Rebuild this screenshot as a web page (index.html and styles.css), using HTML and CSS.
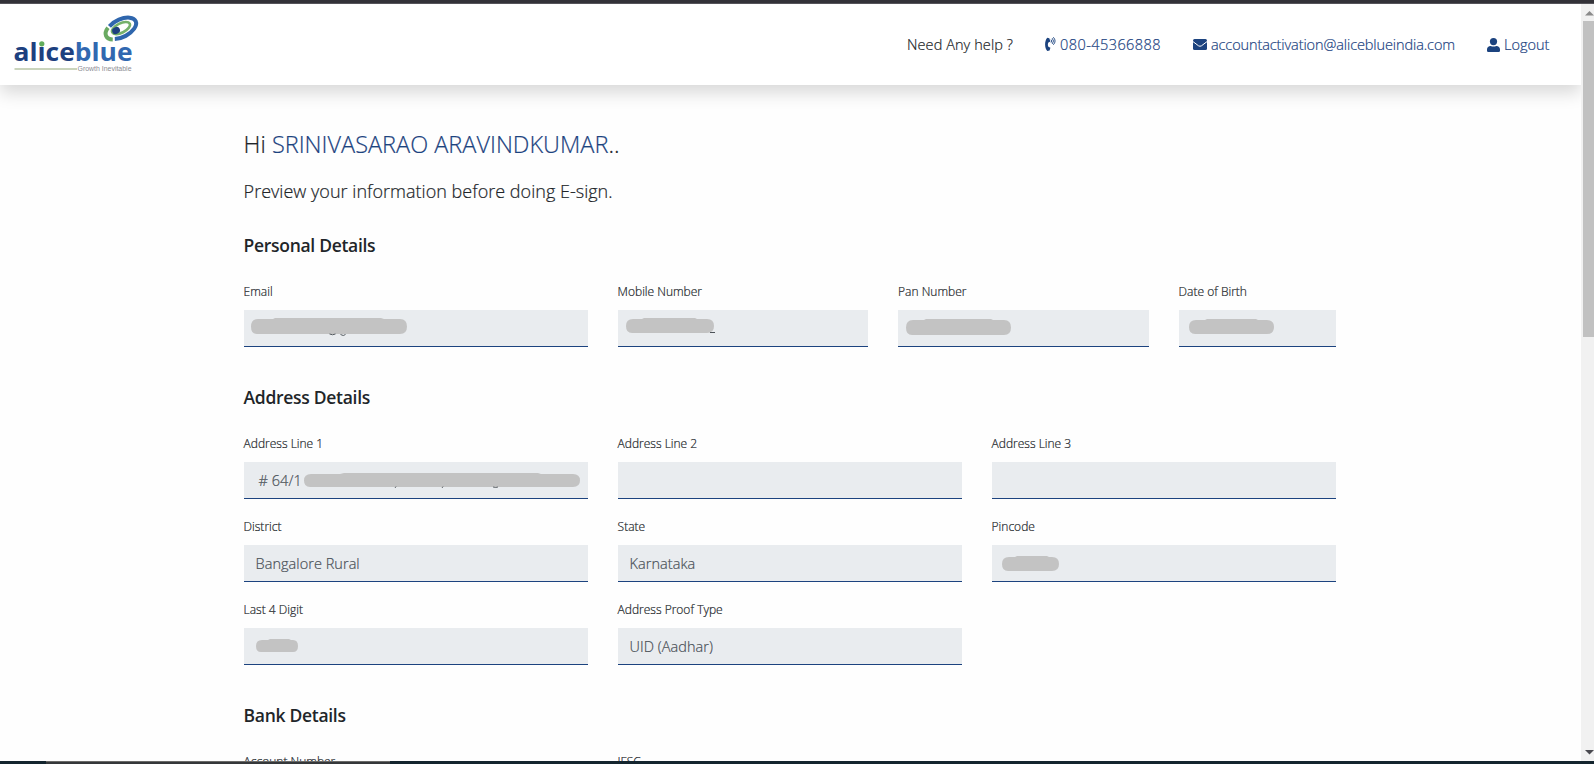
FILE: index.html
```html
<!DOCTYPE html>
<html lang="en">
<head>
<meta charset="utf-8">
<title>Alice Blue - Preview your information</title>
<link rel="stylesheet" href="styles.css">
</head>
<body>
<div class="window-top"></div>
<div class="viewport">
  <div class="page">
    <header class="header">
      <svg class="logo" width="132" height="64" viewBox="10 12 132 64" role="img" aria-label="aliceblue">
        <g transform="rotate(-27 120.500 28.200)" fill="none">
          <path d="M111.500 21.500A16.200 8.800 0 1 1 110.500 35.300" stroke="#2f66ad" stroke-width="4"/>
          <path d="M109.500 22.200C102.500 25.500 102.500 31.500 108.500 34.700" stroke="#6aaa62" stroke-width="4"/>
          <ellipse cx="121" cy="28.300" rx="9.800" ry="4.700" stroke="#76b16b" stroke-width="2.600"/>
          <ellipse cx="115.500" cy="28.300" rx="4" ry="3.400" fill="#1d407f"/>
        </g>
        <text class="logo-name" x="13.500" y="61.200" textLength="119" lengthAdjust="spacingAndGlyphs"><tspan fill="#1d407f">alice</tspan><tspan fill="#3168b0">blue</tspan></text>
        <rect x="38.600" y="40" width="6" height="6" fill="#fff"/>
        <circle cx="41.800" cy="43.800" r="2.600" fill="#62ad5c"/>
        <path d="M14.500 69H77" stroke="#b9c6a6" stroke-width="1.300"/>
        <text class="logo-tag" x="77.500" y="71" textLength="54" lengthAdjust="spacingAndGlyphs">Growth Inevitable</text>
      </svg>
      <nav class="nav">
        <span class="nav-help">Need Any help ?</span>
        <a class="nav-link phone">
          <svg width="11" height="15" viewBox="0 0 11 15"><path d="M4.300 1.200 2.300.8C.8 2.300.1 4.800.1 7.600s.8 5 2.200 6.300l2.300-.4.800-2.800-2-1c-.7-1.300-.7-3 0-4.300l2-1z" fill="#1c437f"/><path d="M6.300 2.900q1 1.100 0 2.400M7.500 1.500q2.200 2.500 0 5.100M8.600.5q3.200 3.500 0 7" fill="none" stroke="#1c437f" stroke-width=".9" stroke-linecap="round"/></svg>
          <span>080-45366888</span>
        </a>
        <a class="nav-link mail">
          <svg width="14" height="11" viewBox="0 0 14 11"><rect width="14" height="11" rx="1.500" fill="#1c437f"/><path d="M0 2.600 5.500 6.800Q7 7.700 8.500 6.800L14 2.600" fill="none" stroke="#fff" stroke-width="1"/></svg>
          <span>accountactivation@aliceblueindia.com</span>
        </a>
        <a class="nav-link logout">
          <svg width="13" height="14" viewBox="0 0 13 14"><circle cx="6.500" cy="3.600" r="3.600" fill="#1c437f"/><path d="M0 12.700v-1.200C0 9.500 1.500 8 3.700 8q2.800 1.200 5.600 0c2.200 0 3.700 1.500 3.700 3.500v1.200q0 1.300-1.300 1.300H1.300Q0 14 0 12.700" fill="#1c437f"/></svg>
          <span>Logout</span>
        </a>
      </nav>
    </header>

    <main class="content">
      <h1 class="greeting">Hi <span>SRINIVASARAO ARAVINDKUMAR</span>..</h1>
      <p class="intro">Preview your information before doing E-sign.</p>

      <h2 class="section-title">Personal Details</h2>
      <div class="fields">
        <div class="field span-4"><label>Email</label><div class="value email">
          <svg width="156" height="19" viewBox="0 0 156 19"><path d="M7 1H22L24 0H130L133 1H149Q156 1 156 8.500T149 16H6Q0 16 0 8.500T7 1" fill="#c3c3c3"/><path d="M78.500 16q3 1.500 6 0M89.500 16.500q3 2 5 0" fill="none" stroke="#555b60"/></svg></div></div>
        <div class="field span-3"><label>Mobile Number</label><div class="value mobile">
          <svg width="89" height="19" viewBox="0 0 89 19"><path d="M7 1H16L18 0H69L71 1H81Q88 1 88 8T81 15H6Q0 15 0 8T7 1" fill="#c3c3c3"/><path d="M84 14.500h5" stroke="#4c5258"/></svg></div></div>
        <div class="field span-3"><label>Pan Number</label><div class="value pan">
          <svg width="105" height="16" viewBox="0 0 105 16"><path d="M7 1H18L20 0H85L87 1H98Q105 1 105 8.500T98 16H6Q0 16 0 8.500T7 1" fill="#c3c3c3"/></svg></div></div>
        <div class="field span-2"><label>Date of Birth</label><div class="value dob">
          <svg width="85" height="15" viewBox="0 0 85 15"><path d="M7 1H16L18 0H67L69 1H78Q85 1 85 8T78 15H6Q0 15 0 8T7 1" fill="#c3c3c3"/></svg></div></div>
      </div>

      <h2 class="section-title address-title">Address Details</h2>
      <div class="fields">
        <div class="field span-4"><label>Address Line 1</label><div class="value line1"><span># 64/1</span>
          <svg width="276" height="16" viewBox="0 0 276 16"><path d="M7 1H36L40 0H234L237 1H269Q276 1 276 7.500T269 14H6Q0 14 0 7.500T7 1" fill="#c3c3c3"/><path d="M92 13.500l-1 1.500M139 13.500l-1 1.500M189 14q3 1 5 0" fill="none" stroke="#62676c"/></svg></div></div>
        <div class="field span-4"><label>Address Line 2</label><div class="value"></div></div>
        <div class="field span-4"><label>Address Line 3</label><div class="value"></div></div>
        <div class="field span-4"><label>District</label><div class="value">Bangalore Rural</div></div>
        <div class="field span-4"><label>State</label><div class="value">Karnataka</div></div>
        <div class="field span-4"><label>Pincode</label><div class="value pincode">
          <svg width="57" height="15" viewBox="0 0 57 15"><path d="M7 1H13L15 0H45L47 1H50Q57 1 57 8T50 15H6Q0 15 0 8T7 1" fill="#c3c3c3"/></svg></div></div>
        <div class="field span-4"><label>Last 4 Digit</label><div class="value digits">
          <svg width="42" height="13" viewBox="0 0 42 13"><path d="M6 1H12L14 0H33L35 1H37Q42 1 42 7T37 13H5Q0 13 0 7T6 1" fill="#c3c3c3"/></svg></div></div>
        <div class="field span-4"><label>Address Proof Type</label><div class="value">UID (Aadhar)</div></div>
      </div>

      <h2 class="section-title bank-title">Bank Details</h2>
      <div class="fields">
        <div class="field span-4"><label>Account Number</label><div class="value"></div></div>
        <div class="field span-4"><label>IFSC</label><div class="value"></div></div>
      </div>
    </main>
  </div>
  <div class="scrollbar">
    <svg class="arrow" width="9" height="5" viewBox="0 0 9 5"><path d="M0 4.500 4.500 0 9 4.500z" fill="#8a8a8a"/></svg>
    <div class="thumb"></div>
    <svg class="arrow" width="9" height="5" viewBox="0 0 9 5"><path d="M0 0h9L4.500 4.500z" fill="#4a4a50"/></svg>
  </div>
</div>
<div class="window-bottom"><span></span></div>
</body>
</html>
```
FILE: styles.css
```css
* { box-sizing: border-box; }
body {
  margin: 0;
  height: 764px;
  display: flex;
  flex-direction: column;
  overflow: hidden;
  background: #fefefe;
  color: #212529;
  font-family: "Open Sans", "Noto Sans", sans-serif;
  font-weight: 300;
  -webkit-text-stroke: .2px;
}
.window-top { flex: none; height: 4px; background: #333238; border-bottom: 1px solid #55545a; }
.viewport { flex: none; height: 757px; display: flex; overflow: hidden; }
.page { flex: 1; min-width: 0; height: 757px; overflow: hidden; }

.header {
  height: 81px;
  padding: 0 32px 0 10px;
  display: flex;
  justify-content: space-between;
  background: #fff;
  box-shadow: 0 8px 16px rgba(0, 0, 0, .15);
}
.logo { margin-top: 8px; flex: none; -webkit-text-stroke: 0; }
.logo-name { font-family: "Open Sans", sans-serif; font-weight: 700; font-size: 25.5px; }
.logo-tag { font-family: "Liberation Sans", sans-serif; font-weight: 400; font-size: 6.5px; fill: #8b8b93; }

.nav { display: flex; align-items: center; gap: 32px; height: 81px; font-size: 14.5px; line-height: 20px; white-space: nowrap; }
.nav-help { width: 106px; letter-spacing: .08px; }
.nav-link { display: flex; align-items: center; gap: 4px; color: #1c437f; }
.nav-link svg { flex: none; }
.phone { width: 116px; letter-spacing: .44px; }
.mail { width: 262px; letter-spacing: -.1px; }
.logout { width: 62px; }

.content { width: 1092px; margin-left: 243.6px; padding-top: 41px; }
.greeting { margin: 0; font-size: 23.5px; line-height: 36px; font-weight: 300; letter-spacing: 0; }
.greeting span { color: #1c437f; }
.intro { margin: 15px 0 0; font-size: 18px; line-height: 28px; letter-spacing: .02px; }
.section-title { margin: 27px 0 0; font-size: 17.5px; line-height: 26px; font-weight: 600; letter-spacing: -.3px; -webkit-text-stroke: 0; }
.address-title { margin-top: 37px; }
.bank-title { margin-top: 37px; }

.fields { display: grid; grid-template-columns: repeat(12, minmax(0, 1fr)); column-gap: 30px; row-gap: 19px; margin-top: 25px; }
.span-2 { grid-column: span 2; }
.span-3 { grid-column: span 3; }
.span-4 { grid-column: span 4; }
.field label { display: block; height: 27px; font-size: 12px; line-height: 18px; letter-spacing: 0; }
.value {
  height: 37px;
  padding-left: 12px;
  display: flex;
  align-items: center;
  background: #e9ecef;
  border-bottom: 1px solid #1c437f;
  color: #495057;
  font-size: 14.5px;
  letter-spacing: .04px;
}
.value svg { flex: none; align-self: flex-start; }
.email { padding: 8px 0 0 7px; }
.mobile { padding: 8px 0 0 8px; }
.pan { padding: 9px 0 0 8px; }
.dob { padding: 9px 0 0 10px; }
.line1 { padding-left: 15px; }
.line1 span { width: 45px; white-space: nowrap; }
.line1 svg { margin-top: 11px; }
.pincode { padding: 11px 0 0 10px; }
.digits { padding: 11px 0 0 12px; }

.scrollbar { flex: none; width: 13px; padding-left: 2px; display: flex; flex-direction: column; align-items: center; background: #f1f1f1; }
.arrow { margin: 7px 0 5px 2px; flex: none; }
.thumb { width: 11px; height: 316px; background: #c1c1c1; }
.scrollbar .arrow:last-child { margin-top: auto; margin-bottom: 6px; }

.window-bottom { flex: none; height: 3px; padding-left: 46px; background: #14252e; }
.window-bottom span { display: block; width: 344px; height: 3px; background: #35383a; border-top: 1px solid #6a6a68; }
```
